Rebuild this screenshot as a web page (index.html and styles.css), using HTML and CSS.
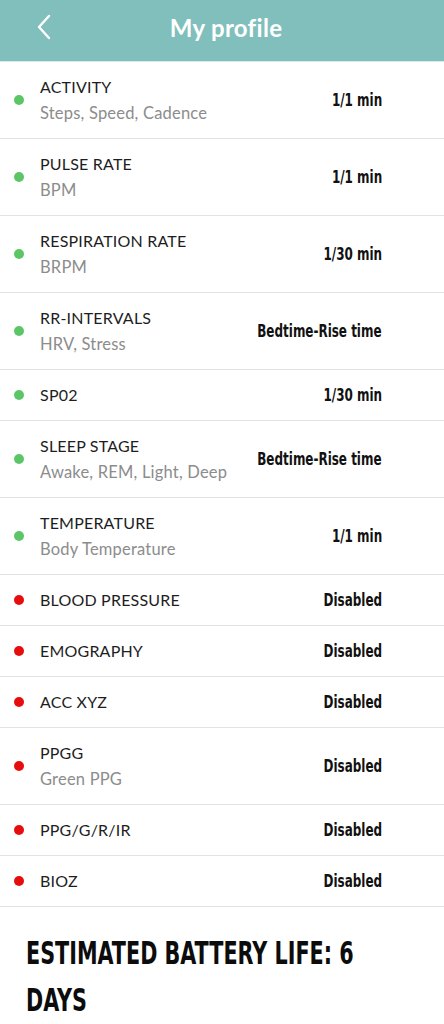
FILE: index.html
```html
<!DOCTYPE html>
<html>
<head>
<meta charset="utf-8">
<link rel="stylesheet" href="styles.css">
</head>
<body>
<header class="topbar">
  <svg class="back" width="16" height="26" viewBox="0 0 16 26"><path d="M13 2 L3 13 L13 24" fill="none" stroke="#fff" stroke-width="2.4" stroke-linecap="round" stroke-linejoin="round"/></svg>
  <h1 class="title">My profile</h1>
</header>
<ul class="list">
  <li class="row"><span class="dot on"></span><div class="text"><div class="label">ACTIVITY</div><div class="sub">Steps, Speed, Cadence</div></div><span class="value">1/1 min</span></li>
  <li class="row"><span class="dot on"></span><div class="text"><div class="label">PULSE RATE</div><div class="sub">BPM</div></div><span class="value">1/1 min</span></li>
  <li class="row"><span class="dot on"></span><div class="text"><div class="label">RESPIRATION RATE</div><div class="sub">BRPM</div></div><span class="value">1/30 min</span></li>
  <li class="row"><span class="dot on"></span><div class="text"><div class="label">RR-INTERVALS</div><div class="sub">HRV, Stress</div></div><span class="value">Bedtime-Rise time</span></li>
  <li class="row"><span class="dot on"></span><div class="text"><div class="label">SP02</div></div><span class="value">1/30 min</span></li>
  <li class="row"><span class="dot on"></span><div class="text"><div class="label">SLEEP STAGE</div><div class="sub">Awake, REM, Light, Deep</div></div><span class="value">Bedtime-Rise time</span></li>
  <li class="row"><span class="dot on"></span><div class="text"><div class="label">TEMPERATURE</div><div class="sub">Body Temperature</div></div><span class="value">1/1 min</span></li>
  <li class="row"><span class="dot off"></span><div class="text"><div class="label">BLOOD PRESSURE</div></div><span class="value">Disabled</span></li>
  <li class="row"><span class="dot off"></span><div class="text"><div class="label">EMOGRAPHY</div></div><span class="value">Disabled</span></li>
  <li class="row"><span class="dot off"></span><div class="text"><div class="label">ACC XYZ</div></div><span class="value">Disabled</span></li>
  <li class="row"><span class="dot off"></span><div class="text"><div class="label">PPGG</div><div class="sub">Green PPG</div></div><span class="value">Disabled</span></li>
  <li class="row"><span class="dot off"></span><div class="text"><div class="label">PPG/G/R/IR</div></div><span class="value">Disabled</span></li>
  <li class="row"><span class="dot off"></span><div class="text"><div class="label">BIOZ</div></div><span class="value">Disabled</span></li>
</ul>
<div class="battery-wrap"><p class="battery">ESTIMATED BATTERY LIFE: 6 DAYS</p></div>
</body>
</html>
```
FILE: styles.css
```css
* { box-sizing: border-box; }
html, body { margin: 0; padding: 0; background: #fff; }
body { width: 444px; font-family: Lato, "Noto Sans", sans-serif; color: #1a1a1a; overflow: hidden; }
.topbar {
  height: 62px;
  background: #80bfbc;
  border-bottom: 1px solid #d9ecea;
  display: flex;
  align-items: center;
  justify-content: center;
  position: relative;
}
.back { position: absolute; left: 36px; top: 14px; }
.title {
  margin: 0;
  color: #fff;
  font-family: Lato, sans-serif;
  font-weight: 700;
  font-size: 24px;
  letter-spacing: 0.3px;
  padding: 0 0 6px 8px;
}
.list { list-style: none; margin: 0; padding: 0; }
.row {
  display: flex;
  align-items: center;
  padding: 12px 62px 12px 14px;
  border-bottom: 1px solid #e3e3e3;
}
.dot { width: 10px; height: 10px; border-radius: 50%; flex: none; margin-right: 16px; }
.dot.on { background: #5cc667; }
.dot.off { background: #e60d0d; }
.text { flex: 1; min-width: 0; white-space: nowrap; }
.label { font-size: 16px; line-height: 26px; color: #1e1e1e; letter-spacing: 0.2px; }
.sub { font-size: 16.5px; line-height: 26px; color: #8c8c8c; letter-spacing: 0.2px; }
.value {
  display: inline-block;
  flex: none;
  font-family: "DejaVu Sans", sans-serif;
  font-stretch: condensed;
  font-weight: 700;
  font-size: 17.5px;
  color: #111;
  white-space: nowrap;
  transform: scaleX(0.76);
  transform-origin: right center;
}
.battery-wrap { padding: 23px 26px 0 26px; }
.battery {
  margin: 0;
  width: 480px;
  font-family: "DejaVu Sans", sans-serif;
  font-stretch: condensed;
  font-weight: 700;
  font-size: 32px;
  line-height: 47px;
  color: #0c0c0c;
  transform: scaleX(0.72);
  transform-origin: left top;
}
```
